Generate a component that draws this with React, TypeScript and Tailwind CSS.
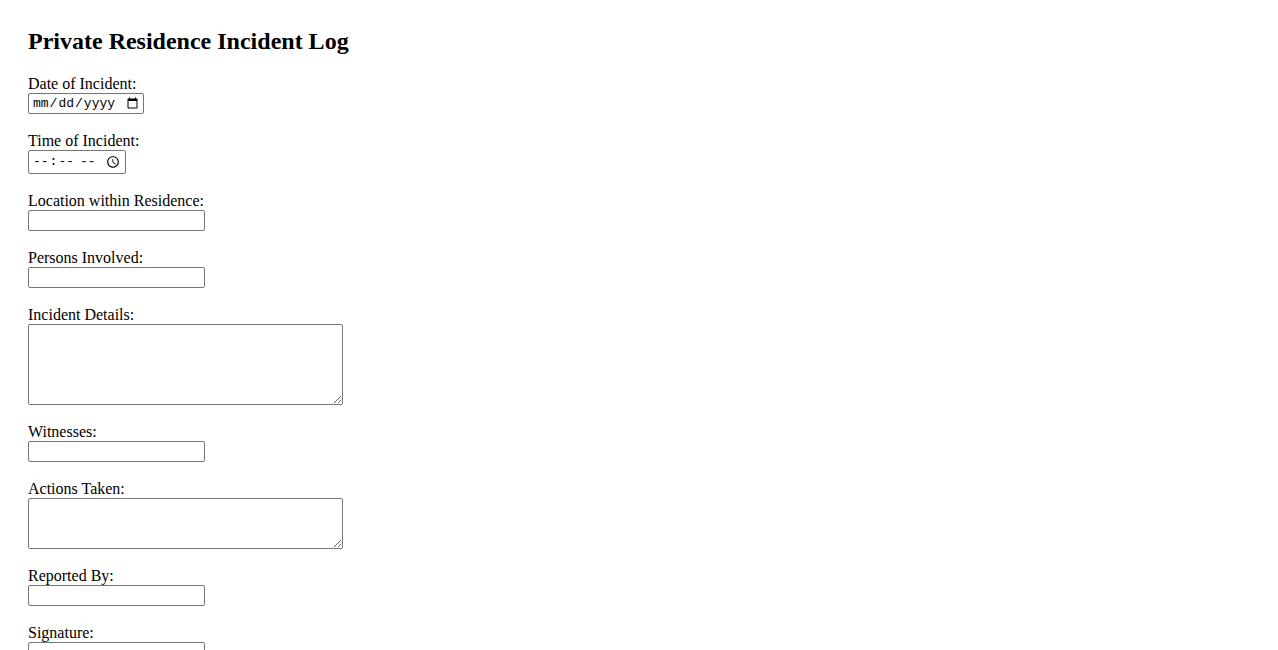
const fieldInput =
  "block h-[21px] w-[177px] rounded-[2px] border border-[#767676] bg-white px-[2px] text-[13px]";

function Field({ label, children }: { label: string; children: React.ReactNode }) {
  return (
    <div className="mb-[18px]">
      <label className="block leading-[18px]">{label}</label>
      {children}
    </div>
  );
}

export default function App() {
  return (
    <div className="h-screen overflow-hidden bg-white text-black" style={{ fontFamily: '"Liberation Serif", serif' }}>
      <main className="px-[28px] pt-[27px] text-[16px]">
        <h2 className="mb-[20px] text-[24px] font-bold leading-[28px]">Private Residence Incident Log</h2>
        <form>
          <Field label="Date of Incident:">
            <input
              type="date"
              className="block h-[21px] w-[116px] rounded-[2px] border border-[#767676] bg-white pl-[3px] pr-[2px] text-[13px]"
              style={{ fontFamily: '"Liberation Mono", monospace' }}
            />
          </Field>
          <Field label="Time of Incident:">
            <input
              type="time"
              className="block h-[24px] w-[98px] rounded-[2px] border border-[#767676] bg-white pl-[3px] pr-[2px] text-[13px]"
              style={{ fontFamily: '"Liberation Mono", monospace' }}
            />
          </Field>
          <Field label="Location within Residence:">
            <input type="text" className={fieldInput} />
          </Field>
          <Field label="Persons Involved:">
            <input type="text" className={fieldInput} />
          </Field>
          <Field label="Incident Details:">
            <textarea className="block h-[81px] w-[315px] rounded-[2px] border border-[#767676] bg-white text-[13px]" />
          </Field>
          <Field label="Witnesses:">
            <input type="text" className={fieldInput} />
          </Field>
          <Field label="Actions Taken:">
            <textarea className="block h-[51px] w-[315px] rounded-[2px] border border-[#767676] bg-white text-[13px]" />
          </Field>
          <Field label="Reported By:">
            <input type="text" className={fieldInput} />
          </Field>
          <Field label="Signature:">
            <input type="text" className={fieldInput} />
          </Field>
        </form>
      </main>
    </div>
  );
}
